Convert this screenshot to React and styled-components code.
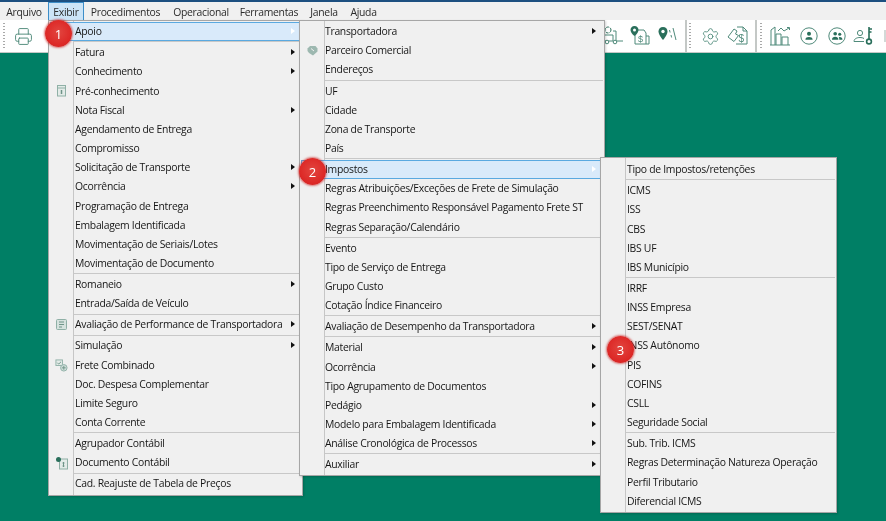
import React from "react";
import styled, { createGlobalStyle } from "styled-components";
import { Printer, Settings } from "lucide-react";

const GlobalStyle = createGlobalStyle`
  html, body {
    margin: 0;
    padding: 0;
    height: 100%;
    overflow: hidden;
    background: #007f65;
  }
  #root {
    height: 100%;
  }
`;

const GREEN = "#4f8a7a";
const DARK = "#2a6f5b";
const PALE = "#8fb0a6";

const DocIcon = () => (
  <svg width="13" height="13" viewBox="0 0 13 13" fill="none" stroke={PALE} strokeWidth="1">
    <rect x="2.5" y="1.5" width="8" height="10.5" fill="#e3ebe8" />
    <path d="M2.500 4h8" />
    <path d="M6.500 6v4M5.500 7h2M5.500 9h2" stroke="#6f9488" />
  </svg>
);

const ReportIcon = () => (
  <svg width="13" height="13" viewBox="0 0 13 13" fill="none" stroke={PALE} strokeWidth="1">
    <rect x="1.5" y="1.5" width="10" height="10" rx="1" fill="#d5e2de" />
    <path d="M4 4h5M4 6.500h5M4 9h3" stroke="#6f9488" />
  </svg>
);

const ComboIcon = () => (
  <svg width="13" height="13" viewBox="0 0 14 14" fill="none" stroke={PALE} strokeWidth="1">
    <rect x="1" y="1" width="7" height="6" fill="#e3ebe8" />
    <path d="M2.500 4l1.500 1.500L6.500 3" stroke="#6f9488" />
    <circle cx="9.500" cy="9.500" r="3.500" fill="#cfdeda" />
    <path d="M9.500 7.500v4M7.500 9.500h4" stroke="#6f9488" />
  </svg>
);

const LedgerIcon = () => (
  <svg width="14" height="14" viewBox="0 0 14 14" fill="none" stroke={PALE} strokeWidth="1">
    <rect x="4.500" y="3" width="8" height="10" fill="#e3ebe8" />
    <path d="M8.500 6v5M7.500 7h2M7.500 10h2" stroke="#6f9488" />
    <circle cx="3.500" cy="3.500" r="2.500" fill={DARK} stroke="none" />
  </svg>
);

const PartnerIcon = () => (
  <svg width="13" height="13" viewBox="0 0 13 13">
    <path d="M1.500 4.500 4 2h5.500l2 2.500v3L7 11.500 3 9 1.500 7z" fill="#9db8b0" />
    <path d="M5 4.500 8 7" stroke="#f0f0f0" strokeWidth="1" />
  </svg>
);

const ForkliftIcon = () => (
  <svg width="22" height="22" viewBox="0 0 22 22" fill="none" stroke={GREEN} strokeWidth="1">
    <circle cx="5" cy="5" r="3" strokeDasharray="3 1" stroke={DARK} />
    <path d="M1 10h9v6H1zM10 6h3v10M13 16h7" />
    <circle cx="4" cy="17" r="1.800" fill="#fff" />
    <circle cx="12" cy="17" r="1.800" fill="#fff" />
  </svg>
);

const PinDocIcon = () => (
  <svg width="22" height="22" viewBox="0 0 22 22" fill="none" stroke={GREEN} strokeWidth="1">
    <path d="M6 5h9l2 3v11H6z" />
    <path d="M17 11h3v8h-3" />
    <path d="M5.500 1C3 1 1.500 3 1.500 5c0 3 4 6 4 6s4-3 4-6c0-2-1.500-4-4-4z" fill={DARK} stroke="none" />
    <circle cx="5.500" cy="5" r="1.500" fill="#fff" stroke="none" />
    <text x="9" y="17" fontSize="9" fontFamily="Liberation Sans" fill={GREEN} stroke="none">$</text>
  </svg>
);

const PinRoadIcon = () => (
  <svg width="22" height="22" viewBox="0 0 22 22" fill="none" stroke={GREEN} strokeWidth="1">
    <path d="M7 2C4.200 2 2.500 4 2.500 6.500 2.500 10 7 15 7 15s4.500-5 4.500-8.500C11.500 4 9.800 2 7 2z" fill={DARK} stroke="none" />
    <circle cx="7" cy="6.500" r="1.700" fill="#fff" stroke="none" />
    <path d="M13.500 5l.6 2.500M15 10l.6 2.500" />
    <path d="M17 3l3 12" />
  </svg>
);

const HandDocIcon = () => (
  <svg width="22" height="22" viewBox="0 0 22 22" fill="none" stroke={GREEN} strokeWidth="1">
    <path d="M10 2h6l4 4v13H9" />
    <path d="M16 2v4h4" />
    <path d="M1 12l6-8 3 2-1.500 3 3 1.500-4.500 6z" fill="#fff" />
    <text x="11.500" y="17" fontSize="10" fontFamily="Liberation Sans" fill={GREEN} stroke="none">$</text>
  </svg>
);

const ChartIcon = () => (
  <svg width="24" height="22" viewBox="0 0 24 22" fill="none" stroke={GREEN} strokeWidth="1">
    <path d="M2 20V5l4-3v18M7 20V9h5v11M13 20v-8h6v8M1 20h20" />
    <path d="M9 6l3-3 3 3 5-3M18 2.500h2.500V5" />
  </svg>
);

const UserCircleIcon = () => (
  <svg width="20" height="20" viewBox="0 0 22 22" fill="none" stroke={GREEN} strokeWidth="1.100">
    <circle cx="11" cy="11" r="9" />
    <circle cx="11" cy="8.500" r="2.200" fill={DARK} stroke="none" />
    <path d="M7 15c0-2.200 1.800-3 4-3s4 .8 4 3z" fill={DARK} stroke="none" />
  </svg>
);

const UsersCircleIcon = () => (
  <svg width="20" height="20" viewBox="0 0 22 22" fill="none" stroke={GREEN} strokeWidth="1.100">
    <circle cx="11" cy="11" r="9" />
    <circle cx="9" cy="8.500" r="2" fill={DARK} stroke="none" />
    <circle cx="14" cy="9" r="1.700" fill={DARK} stroke="none" />
    <path d="M5.500 15c0-2.200 1.500-3.200 3.500-3.200s3.500 1 3.500 3.200z" fill={DARK} stroke="none" />
    <path d="M13.500 15h3.500c0-2-1-3-3-3l-1 .3c.5.800.5 1.700.5 2.700z" fill={DARK} stroke="none" />
  </svg>
);

const UserKeyIcon = () => (
  <svg width="24" height="22" viewBox="0 0 24 22" fill="none" stroke={GREEN} strokeWidth="1">
    <circle cx="7" cy="8" r="2.600" />
    <path d="M1 16.500c0-2.800 3-4 6-4 1.500 0 3 .3 4 1M1 16.500h10" />
    <path d="M16 2v12M16 4h3M16 7h2.500" stroke={DARK} strokeWidth="1.600" />
    <circle cx="16" cy="16.500" r="2.400" stroke={DARK} strokeWidth="1.600" />
  </svg>
);

const Page = styled.div`
  display: flex;
  flex-direction: column;
  height: 100%;
  position: relative;
  overflow: hidden;
  font-family: "Open Sans", "Liberation Sans", sans-serif;
  font-size: 10.4px;
  letter-spacing: -0.29px;
  color: #161616;
  filter: blur(0.25px);
`;

const TitleEdge = styled.div`
  height: 2px;
  background: #1c4f80;
`;

const MenuBar = styled.div`
  display: flex;
  align-items: stretch;
  height: 18px;
  background: #f0f0f0;
`;

const MenuBarItem = styled.div`
  display: flex;
  align-items: center;
  box-sizing: border-box;
  width: ${(p) => p.$width}px;
  justify-content: center;
  color: #2b2b2b;
  background: ${(p) => (p.$open ? "#cce4f7" : "transparent")};
  border: 1px solid ${(p) => (p.$open ? "#3d8ec9" : "transparent")};
  border-bottom-width: 0;
`;

const Toolbar = styled.div`
  display: flex;
  align-items: stretch;
  justify-content: space-between;
  height: 32px;
  background: #fff;
  border-bottom: 1px solid #c4c8c6;
`;

const ToolGroup = styled.div`
  display: flex;
  align-items: center;
  padding-left: ${(p) => p.$left || 0}px;
`;

const Grip = styled.div`
  width: 2px;
  height: 26px;
  margin: 0 ${(p) => p.$after || 0}px 0 ${(p) => p.$before || 0}px;
  background: repeating-linear-gradient(to bottom, #a9a9a9 0 1px, transparent 1px 3px);
`;

const ToolDivider = styled.div`
  align-self: stretch;
  width: 2px;
  margin-left: ${(p) => p.$before || 0}px;
  background: #c4c8c6;
`;

const ToolButton = styled.div`
  display: flex;
  align-items: center;
  justify-content: center;
  width: ${(p) => p.$width || 28}px;
  color: ${GREEN};
`;

const ClippedTool = styled.div`
  width: 7px;
  height: 12px;
  align-self: center;
  background: linear-gradient(to right, transparent 5px, #d3d9d7 5px);
`;

const Desktop = styled.div`
  flex: 1;
  background: #007f65;
`;

const Menu = styled.div`
  position: absolute;
  left: ${(p) => p.$left}px;
  top: ${(p) => p.$top}px;
  width: ${(p) => p.$width}px;
  box-sizing: border-box;
  padding: ${(p) => p.$padTop || 1}px 1px 1px;
  border: 1px solid #a6a6a6;
  background: linear-gradient(to right, #f0f0f0 24px, #c6c6c6 24px, #c6c6c6 25px, #f0f0f0 25px);
  box-shadow: 1px 1px 2px rgba(0, 0, 0, 0.18);
  z-index: ${(p) => p.$layer};
`;

const Row = styled.div`
  position: relative;
  display: flex;
  align-items: center;
  box-sizing: border-box;
  height: 19.2px;
  padding-left: ${(p) => p.$indent || 25}px;
  padding-bottom: 1px;
  white-space: nowrap;
  ${(p) =>
    p.$active &&
    `
    background: #d9eafa;
    box-shadow: inset 0 0 0 1px #5aa9e0;
  `}
`;

const RowIcon = styled.span`
  position: absolute;
  left: 5px;
  top: 3px;
  display: flex;
`;

const Arrow = styled.span`
  position: absolute;
  right: ${(p) => p.$right || 6}px;
  top: 6px;
  width: 0;
  height: 0;
  border-top: 3.500px solid transparent;
  border-bottom: 3.500px solid transparent;
  border-left: 4px solid ${(p) => (p.$active ? "#fff" : "#111")};
`;

const Separator = styled.div`
  height: 1.850px;
  margin-left: 24px;
  box-sizing: border-box;
  border-top: 1px solid #c8c8c8;
`;

const Badge = styled.div`
  position: absolute;
  left: ${(p) => p.$x - 13}px;
  top: ${(p) => p.$y - 13}px;
  width: 27px;
  height: 27px;
  border-radius: 50%;
  display: flex;
  align-items: center;
  justify-content: center;
  background: radial-gradient(circle at 50% 45%, #e2453f 0%, #dd2a28 60%, #d01c1c 100%);
  box-shadow: 0 0 2px 1px rgba(200, 20, 20, 0.55);
  color: #fff;
  font-size: 13px;
  font-weight: 400;
  letter-spacing: 0;
  z-index: 10;
`;

const SEP = { sep: true };

const apoioItems = [
  { label: "Apoio", arrow: true, active: true },
  SEP,
  { label: "Fatura", arrow: true },
  { label: "Conhecimento", arrow: true },
  { label: "Pré-conhecimento", icon: <DocIcon /> },
  { label: "Nota Fiscal", arrow: true },
  { label: "Agendamento de Entrega" },
  { label: "Compromisso" },
  { label: "Solicitação de Transporte", arrow: true },
  { label: "Ocorrência", arrow: true },
  { label: "Programação de Entrega" },
  { label: "Embalagem Identificada" },
  { label: "Movimentação de Seriais/Lotes" },
  { label: "Movimentação de Documento" },
  SEP,
  { label: "Romaneio", arrow: true },
  { label: "Entrada/Saída de Veículo" },
  SEP,
  { label: "Avaliação de Performance de Transportadora", arrow: true, icon: <ReportIcon /> },
  SEP,
  { label: "Simulação", arrow: true },
  { label: "Frete Combinado", icon: <ComboIcon /> },
  { label: "Doc. Despesa Complementar" },
  { label: "Limite Seguro" },
  { label: "Conta Corrente" },
  SEP,
  { label: "Agrupador Contábil" },
  { label: "Documento Contábil", icon: <LedgerIcon /> },
  SEP,
  { label: "Cad. Reajuste de Tabela de Preços" },
];

const cadastroItems = [
  { label: "Transportadora", arrow: true },
  { label: "Parceiro Comercial", icon: <PartnerIcon /> },
  { label: "Endereços" },
  SEP,
  { label: "UF" },
  { label: "Cidade" },
  { label: "Zona de Transporte" },
  { label: "País" },
  SEP,
  { label: "Impostos", arrow: true, active: true },
  { label: "Regras Atribuições/Exceções de Frete de Simulação" },
  { label: "Regras Preenchimento Responsável Pagamento Frete ST" },
  { label: "Regras Separação/Calendário" },
  SEP,
  { label: "Evento" },
  { label: "Tipo de Serviço de Entrega" },
  { label: "Grupo Custo" },
  { label: "Cotação Índice Financeiro" },
  SEP,
  { label: "Avaliação de Desempenho da Transportadora", arrow: true },
  SEP,
  { label: "Material", arrow: true },
  { label: "Ocorrência", arrow: true },
  { label: "Tipo Agrupamento de Documentos" },
  { label: "Pedágio", arrow: true },
  { label: "Modelo para Embalagem Identificada", arrow: true },
  { label: "Análise Cronológica de Processos", arrow: true },
  SEP,
  { label: "Auxiliar", arrow: true },
];

const impostoItems = [
  { label: "Tipo de Impostos/retenções" },
  SEP,
  { label: "ICMS" },
  { label: "ISS" },
  { label: "CBS" },
  { label: "IBS UF" },
  { label: "IBS Município" },
  SEP,
  { label: "IRRF" },
  { label: "INSS Empresa" },
  { label: "SEST/SENAT" },
  { label: "INSS Autônomo" },
  { label: "PIS" },
  { label: "COFINS" },
  { label: "CSLL" },
  { label: "Seguridade Social" },
  SEP,
  { label: "Sub. Trib. ICMS" },
  { label: "Regras Determinação Natureza Operação" },
  { label: "Perfil Tributario" },
  { label: "Diferencial ICMS" },
];

const topMenus = [
  { label: "Arquivo", width: 48 },
  { label: "Exibir", width: 36, open: true },
  { label: "Procedimentos", width: 83 },
  { label: "Operacional", width: 68 },
  { label: "Ferramentas", width: 68 },
  { label: "Janela", width: 42 },
  { label: "Ajuda", width: 37 },
];

const DropMenu = ({ items, left, top, width, layer, indent, arrowRight, padTop }) => (
  <Menu $left={left} $top={top} $width={width} $layer={layer} $padTop={padTop}>
    {items.map((item, i) =>
      item.sep ? (
        <Separator key={i} />
      ) : (
        <Row key={item.label} $active={item.active} $indent={indent}>
          {item.icon && <RowIcon>{item.icon}</RowIcon>}
          {item.label}
          {item.arrow && <Arrow $active={item.active} $right={arrowRight} />}
        </Row>
      )
    )}
  </Menu>
);

export default function App() {
  return (
    <>
      <GlobalStyle />
      <Page>
        <TitleEdge />
        <MenuBar>
          {topMenus.map((m) => (
            <MenuBarItem key={m.label} $width={m.width} $open={m.open}>
              {m.label}
            </MenuBarItem>
          ))}
        </MenuBar>
        <Toolbar>
          <ToolGroup $left={3}>
            <Grip $after={4} />
            <ToolButton>
              <Printer size={19} strokeWidth={1.2} />
            </ToolButton>
          </ToolGroup>
          <ToolGroup>
            <ToolButton $width={26.5}><ForkliftIcon /></ToolButton>
            <ToolButton $width={26.5}><PinDocIcon /></ToolButton>
            <ToolButton $width={26.5}><PinRoadIcon /></ToolButton>
            <ToolDivider $before={5} />
            <Grip $before={2} $after={5} />
            <ToolButton><Settings size={19} strokeWidth={1.1} /></ToolButton>
            <ToolButton><HandDocIcon /></ToolButton>
            <ToolDivider $before={3} />
            <Grip $before={3} $after={5} />
            <ToolButton><ChartIcon /></ToolButton>
            <ToolButton><UserCircleIcon /></ToolButton>
            <ToolButton><UsersCircleIcon /></ToolButton>
            <ToolButton><UserKeyIcon /></ToolButton>
            <ClippedTool />
          </ToolGroup>
        </Toolbar>
        <Desktop />

        <DropMenu items={apoioItems} left={48} top={20} width={255} layer={1} />
        <DropMenu items={cadastroItems} left={299} top={20} width={306} layer={2} indent={24} arrowRight={7} />
        <DropMenu items={impostoItems} left={600} top={157} width={237} layer={3} indent={25} padTop={2} />

        <Badge $x={58} $y={33}>1</Badge>
        <Badge $x={312} $y={171}>2</Badge>
        <Badge $x={620} $y={349}>3</Badge>
      </Page>
    </>
  );
}
